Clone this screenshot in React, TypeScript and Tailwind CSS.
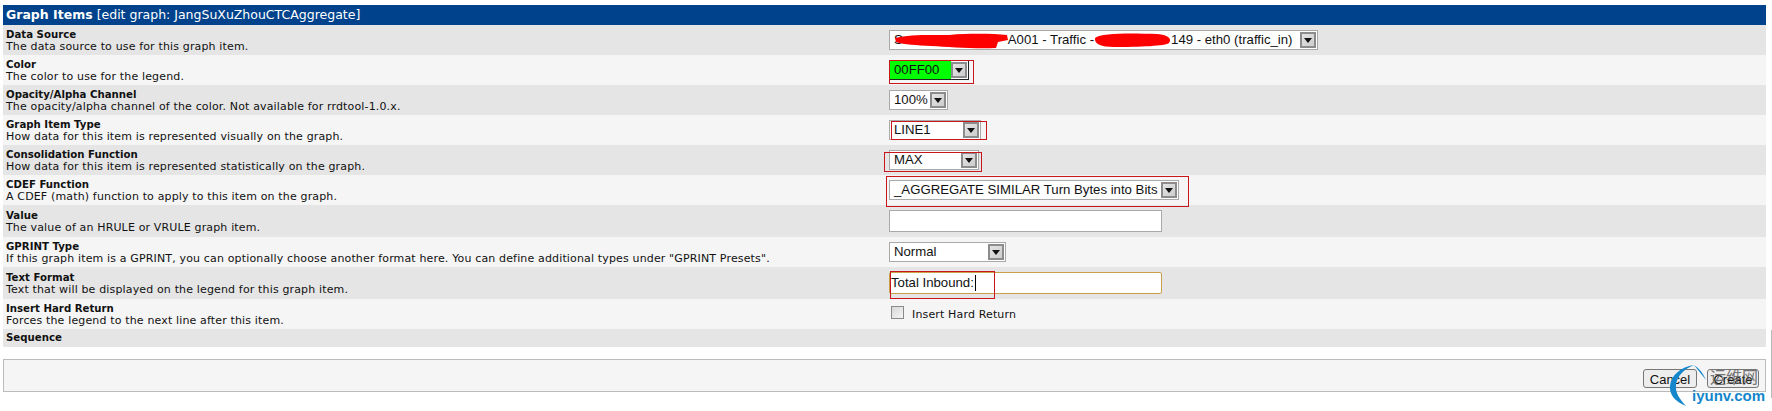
import React from "react";

const verdana = "font-['DejaVu_Sans',sans-serif]";
const arial = "font-['Liberation_Sans',Arial,sans-serif]";

function Arrow() {
  return (
    <span className="w-[16px] h-[16px] shrink-0 border-2 border-[#8c8c8c] bg-gradient-to-br from-[#e4e4e4] to-[#cdcdcd] flex items-center justify-center">
      <svg width="8" height="5" viewBox="0 0 8 5"><path d="M0 0h8L4 5z" fill="#111" /></svg>
    </span>
  );
}

function Sel({ w, children, bg = "bg-white", dark = false }: { w: string; children: React.ReactNode; bg?: string; dark?: boolean }) {
  return (
    <div className={`${w} h-[20px] flex items-center justify-between border ${dark ? "border-t-[#a9a9a9] border-l-[#a9a9a9] border-r-[#222] border-b-[#222]" : "border-[#a9a9a9]"} bg-white pr-[1px] ${arial} text-[13.2px] text-[#111]`}>
      <span className={`${bg} h-full flex-1 pl-[4px] flex items-center whitespace-nowrap overflow-hidden`}>{children}</span>
      <Arrow />
    </div>
  );
}

function Row({ alt, h, title, desc, children }: { alt: boolean; h: string; title: string; desc?: string; children?: React.ReactNode }) {
  return (
    <div className={`${h} flex items-center ${alt ? "bg-[#e5e5e5]" : "bg-[#f5f5f5]"}`}>
      <div className={`w-[886px] shrink-0 pl-[3px] ${desc ? "pt-[2px]" : ""} text-[11px] tracking-[0.15px] leading-[12px] text-[#111] whitespace-nowrap ${verdana}`}>
        <div className="font-bold tracking-normal text-[10.2px]">{title}</div>
        {desc && <div>{desc}</div>}
      </div>
      <div className="flex items-center">{children}</div>
    </div>
  );
}

function Mark({ className }: { className: string }) {
  return <div className={`absolute border border-[#c8161d] ${className}`} />;
}

export default function App() {
  return (
    <div className="relative w-[1772px] h-[411px] overflow-hidden bg-white">
      <div className="pt-[5px] pl-[3px] w-[1766px]">
        <div className={`h-[20px] bg-[#00438c] text-white flex items-center pl-[3px] text-[12.5px] ${verdana}`}>
          <span className="font-bold">Graph Items</span>
          <span className="ml-[4px]">[edit graph: JangSuXuZhouCTCAggregate]</span>
        </div>
        <Row alt h="h-[30px]" title="Data Source" desc="The data source to use for this graph item.">
          <Sel w="w-[429px]"><span>S</span><span className="pl-[105px]">A001 - Traffic -</span><span className="pl-[77px]">149 - eth0 (traffic_in)</span></Sel>
        </Row>
        <Row alt={false} h="h-[30px]" title="Color" desc="The color to use for the legend.">
          <Sel w="w-[80px]" bg="bg-[#00ff00]" dark>00FF00</Sel>
        </Row>
        <Row alt h="h-[30px]" title="Opacity/Alpha Channel" desc="The opacity/alpha channel of the color. Not available for rrdtool-1.0.x.">
          <Sel w="w-[59px]">100%</Sel>
        </Row>
        <Row alt={false} h="h-[30px]" title="Graph Item Type" desc="How data for this item is represented visually on the graph.">
          <Sel w="w-[92px]">LINE1</Sel>
        </Row>
        <Row alt h="h-[30px]" title="Consolidation Function" desc="How data for this item is represented statistically on the graph.">
          <Sel w="w-[90px]">MAX</Sel>
        </Row>
        <Row alt={false} h="h-[30px]" title="CDEF Function" desc="A CDEF (math) function to apply to this item on the graph.">
          <Sel w="w-[290px]">_AGGREGATE SIMILAR Turn Bytes into Bits</Sel>
        </Row>
        <Row alt h="h-[32px]" title="Value" desc="The value of an HRULE or VRULE graph item.">
          <div className="w-[273px] h-[22px] border border-[#a9a9a9] bg-white" />
        </Row>
        <Row alt={false} h="h-[30px]" title="GPRINT Type" desc={'If this graph item is a GPRINT, you can optionally choose another format here. You can define additional types under "GPRINT Presets".'}>
          <Sel w="w-[117px]">Normal</Sel>
        </Row>
        <Row alt h="h-[32px]" title="Text Format" desc="Text that will be displayed on the legend for this graph item.">
          <div className={`w-[273px] h-[22px] rounded-[2px] border border-[#c8a04a] bg-white flex items-center pl-[1px] ${arial} text-[13.2px] text-[#111]`}>
            Total Inbound:<span className="w-px h-[16px] bg-black ml-[1px]" />
          </div>
        </Row>
        <Row alt={false} h="h-[30px]" title="Insert Hard Return" desc="Forces the legend to the next line after this item.">
          <div className={`flex items-center pl-[2px] text-[11px] tracking-[0.15px] text-[#111] ${verdana}`}>
            <span className="w-[13px] h-[13px] -mt-[4px] border border-[#8a8a8a] bg-gradient-to-br from-[#d8d8d8] to-[#f5f5f5]" />
            <span className="ml-[8px] mt-[3px]">Insert Hard Return</span>
          </div>
        </Row>
        <Row alt h="h-[18px]" title="Sequence" />
        <div className="mt-[12px] h-[33px] border border-[#bbbbbb] bg-[#f5f5f5] flex items-center justify-end gap-[10px] pr-[6px]">
          <button className={`w-[54px] h-[19px] mt-[6px] rounded-[3px] border border-[#777] bg-[#ededed] text-[13px] text-[#111] ${arial}`}>Cancel</button>
          <button className={`w-[52px] h-[19px] mt-[6px] rounded-[3px] border border-[#777] bg-[#ededed] text-[13px] text-[#111] ${arial}`}>Create</button>
        </div>
      </div>

      {/* Red redaction scribbles */}
      <svg className="absolute left-[889px] top-[30px]" width="290" height="20" viewBox="0 0 290 20">
        <path d="M6 8 C20 4 45 5 60 5 C85 3 105 4 118 5 L119 10 L109 12 L107 18 C85 19 60 17 42 16 C28 15 15 15 7 12 Z" fill="#f00" />
        <path d="M206 8 C212 3 240 3 268 4 C280 5 283 9 280 13 C277 16 250 17 225 17 C212 17 205 14 206 8 Z" fill="#f00" />
      </svg>

      {/* Red annotation boxes */}
      <Mark className="left-[889px] top-[60px] w-[85px] h-[24px]" />
      <Mark className="left-[891px] top-[121px] w-[96px] h-[19px]" />
      <Mark className="left-[884px] top-[152px] w-[98px] h-[20px]" />
      <Mark className="left-[886px] top-[176px] w-[303px] h-[31px]" />
      <Mark className="left-[890px] top-[271px] w-[105px] h-[28px]" />

      {/* Page edge line */}
      <div className="absolute left-[1771px] top-[330px] w-px h-[68px] bg-[#bbbbbb]" />

      {/* Watermark */}
      <span className="absolute left-[1710px] top-[367px] font-['Noto_Sans_CJK_SC',sans-serif] text-[16px] leading-[18px] text-[#555] opacity-80">运维网</span>
      <svg className="absolute left-[1665px] top-[360px]" width="50" height="50" viewBox="0 0 50 50">
        <path d="M29 5 C16 7 6 15 5 26 C4 35 11 42 21 46 C15 39 10 33 11 25 C12 16 19 9 29 5 Z" fill="#1487cc" />
        <path d="M29 5 C34 8 38 13 41 20 C37 15 33 10 29 5 Z" fill="#1487cc" />
      </svg>
      <span className="absolute left-[1692px] top-[388px] font-['Liberation_Sans',sans-serif] font-bold text-[15px] leading-[16px] text-[#1487cc]">iyunv.com</span>
    </div>
  );
}
